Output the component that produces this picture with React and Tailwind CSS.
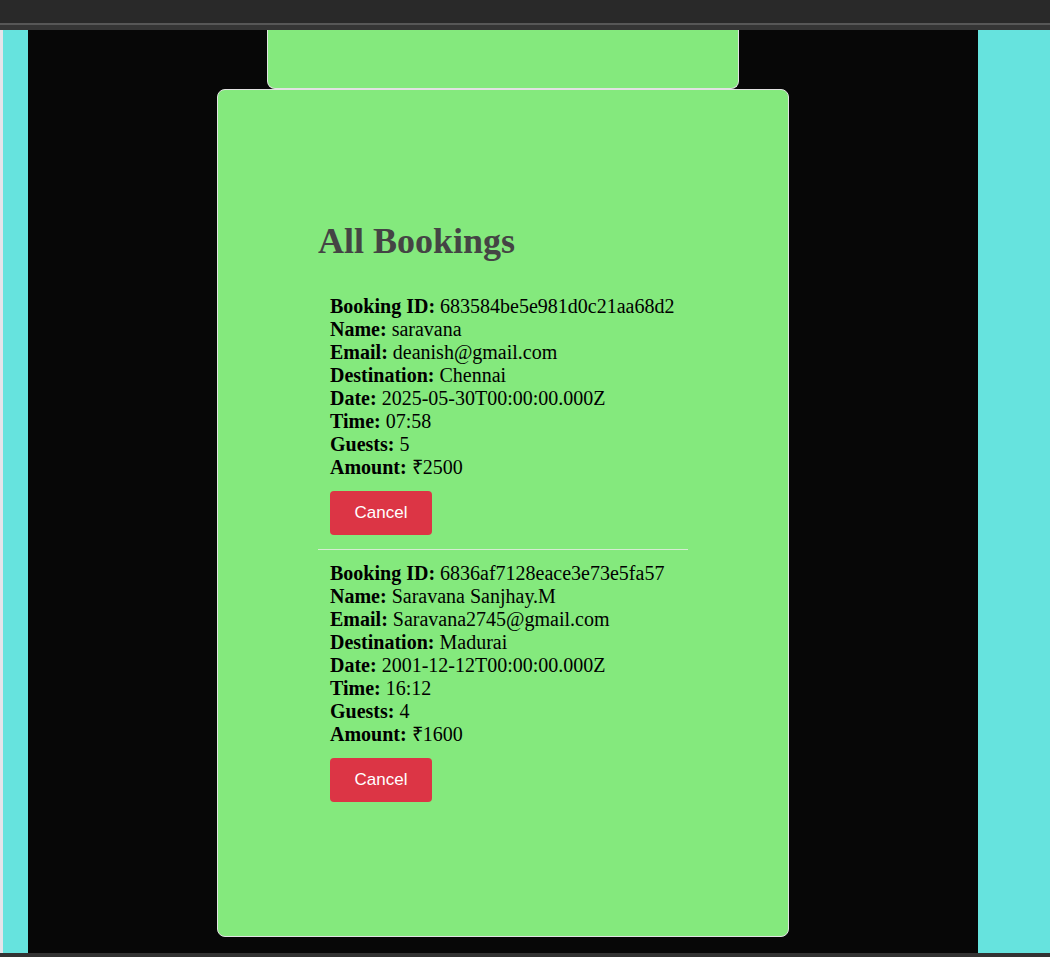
/* eslint-disable */
import React from 'react';

const bookings = [
  {
    id: '683584be5e981d0c21aa68d2',
    name: 'saravana',
    email: 'deanish@gmail.com',
    destination: 'Chennai',
    date: '2025-05-30T00:00:00.000Z',
    time: '07:58',
    guests: 5,
    amount: 2500,
  },
  {
    id: '6836af7128eace3e73e5fa57',
    name: 'Saravana Sanjhay.M',
    email: 'Saravana2745@gmail.com',
    destination: 'Madurai',
    date: '2001-12-12T00:00:00.000Z',
    time: '16:12',
    guests: 4,
    amount: 1600,
  },
];

function Row({ label, value }) {
  return (
    <div className="leading-[23px]">
      <strong className="font-bold">{label}:</strong> {value}
    </div>
  );
}

function BookingItem({ b, last }) {
  return (
    <div className={`px-3 pt-3 pb-[14px] ${last ? '' : 'border-b border-[#d6ecd3]'}`}>
      <Row label="Booking ID" value={b.id} />
      <Row label="Name" value={b.name} />
      <Row label="Email" value={b.email} />
      <Row label="Destination" value={b.destination} />
      <Row label="Date" value={b.date} />
      <Row label="Time" value={b.time} />
      <Row label="Guests" value={b.guests} />
      <Row label="Amount" value={`₹${b.amount}`} />
      <button className="mt-3 h-[44px] w-[102px] rounded-[4px] bg-[#dc3545] text-white text-[17px] font-['Liberation_Sans',Arial,sans-serif]">
        Cancel
      </button>
    </div>
  );
}

export default function App() {
  return (
    <div className="h-[957px] w-full flex flex-col bg-[#070707] overflow-hidden">
      {/* window chrome */}
      <div className="h-[30px] flex flex-col shrink-0">
        <div className="h-[23px] bg-[#292929]" />
        <div className="h-[2px] bg-[#575757]" />
        <div className="h-[5px] bg-[#353535]" />
      </div>

      <div className="flex flex-1 min-h-0">
        <div className="w-[3px] bg-[#e4e4ea]" />
        <div className="w-[25px] bg-[#66e3de]" />
        <div className="flex-1 flex flex-col items-center">
          <div className="w-[472px] h-[59px] bg-[#84e97d] border border-t-0 border-[#e2e2e2] rounded-b-lg" />
          <div className="w-[572px] h-[848px] bg-[#84e97d] border border-[#e2e2e2] rounded-lg pt-[131px] font-['Liberation_Serif','Times_New_Roman',serif] text-black">
            <div className="w-[370px] mx-auto">
              <h2 className="text-[36px] font-bold text-[#444444] leading-[40px] mb-[22px]">All Bookings</h2>
              <div className="text-[20px]">
                {bookings.map((b, i) => (
                  <BookingItem key={b.id} b={b} last={i === bookings.length - 1} />
                ))}
              </div>
            </div>
          </div>
        </div>
        <div className="w-[72px] bg-[#66e3de]" />
      </div>

      <div className="h-[4px] bg-[#333333] shrink-0" />
    </div>
  );
}
